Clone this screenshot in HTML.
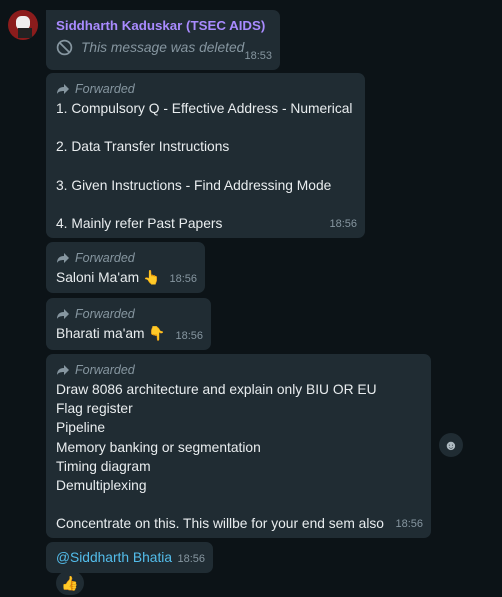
<!DOCTYPE html>
<html><head><style>
body{margin:0;width:502px;height:597px;background:#0c1317;font-family:"Liberation Sans","Noto Sans CJK JP",sans-serif;position:relative;overflow:hidden;color:#e9edef}
.b{position:absolute;left:46px;background:#202c33;border-radius:7px;box-sizing:border-box;padding:7px 9px 0 10px;font-size:13.8px;line-height:19.2px}
.fw{color:#8696a0;font-style:italic;font-size:12.5px;line-height:18px;display:flex;align-items:center;gap:5px;margin-bottom:1px}
.t{position:absolute;right:8px;bottom:4px;font-size:11px;color:#8696a0}
.av{position:absolute;left:8px;top:10px;width:30px;height:30px;border-radius:50%;background:#8b1c1c;overflow:hidden}
</style></head><body>
<div class="av"><div style="position:absolute;left:8px;top:6px;width:14px;height:14px;background:#eee;border-radius:40%"></div><div style="position:absolute;left:10px;top:18px;width:14px;height:10px;background:#222"></div></div>
<div class="b" style="top:10px;width:234px;height:60px;border-top-left-radius:0">
<div style="color:#a98bff;font-weight:bold;font-size:13.3px;line-height:18px">Siddharth Kaduskar (TSEC AIDS)</div>
<div style="color:#8696a0;font-style:italic;display:flex;align-items:center;gap:8px;margin-top:3px"><svg width="17" height="17" viewBox="0 0 16 16"><circle cx="8" cy="8" r="6.5" fill="none" stroke="#8696a0" stroke-width="1.6"/><path d="M3.5 3.5L12.5 12.5" stroke="#8696a0" stroke-width="1.6"/></svg>This message was deleted</div>
<span class="t">18:53</span></div>
<div class="b" style="top:73px;width:319px;height:165px">
<div class="fw"><svg width="14" height="12" viewBox="0 0 14 12"><path d="M8 1L13 6L8 11V8C4 8 2 9 1 11C1 7 3 4 8 4Z" fill="#8696a0"/></svg>Forwarded</div>
1. Compulsory Q - Effective Address - Numerical<br><br>2. Data Transfer Instructions<br><br>3. Given Instructions - Find Addressing Mode<br><br>4. Mainly refer Past Papers
<span class="t">18:56</span></div>
<div class="b" style="top:242px;width:159px;height:51px">
<div class="fw"><svg width="14" height="12" viewBox="0 0 14 12"><path d="M8 1L13 6L8 11V8C4 8 2 9 1 11C1 7 3 4 8 4Z" fill="#8696a0"/></svg>Forwarded</div>
Saloni Ma'am <span style="color:#f5b92e">👆</span><span class="t">18:56</span></div>
<div class="b" style="top:298px;width:165px;height:52px">
<div class="fw"><svg width="14" height="12" viewBox="0 0 14 12"><path d="M8 1L13 6L8 11V8C4 8 2 9 1 11C1 7 3 4 8 4Z" fill="#8696a0"/></svg>Forwarded</div>
Bharati ma'am <span style="color:#f5b92e">👇</span><span class="t">18:56</span></div>
<div class="b" style="top:354px;width:385px;height:184px">
<div class="fw"><svg width="14" height="12" viewBox="0 0 14 12"><path d="M8 1L13 6L8 11V8C4 8 2 9 1 11C1 7 3 4 8 4Z" fill="#8696a0"/></svg>Forwarded</div>
Draw 8086 architecture and explain only BIU OR EU<br>Flag register<br>Pipeline<br>Memory banking or segmentation<br>Timing diagram<br>Demultiplexing<br><br>Concentrate on this. This willbe for your end sem also
<span class="t">18:56</span></div>
<div class="b" style="top:542px;width:167px;height:31px;padding-top:6px;color:#53bdeb">@Siddharth Bhatia<span class="t">18:56</span></div>
<div style="position:absolute;left:56px;top:571px;width:28px;height:24px;border-radius:12px;background:#202c33;font-size:14px;text-align:center;line-height:24px">👍</div>
<div style="position:absolute;left:439px;top:433px;width:24px;height:24px;border-radius:50%;background:#202c33;color:#aebac1;font-size:14px;text-align:center;line-height:24px">☻</div>
</body></html>
